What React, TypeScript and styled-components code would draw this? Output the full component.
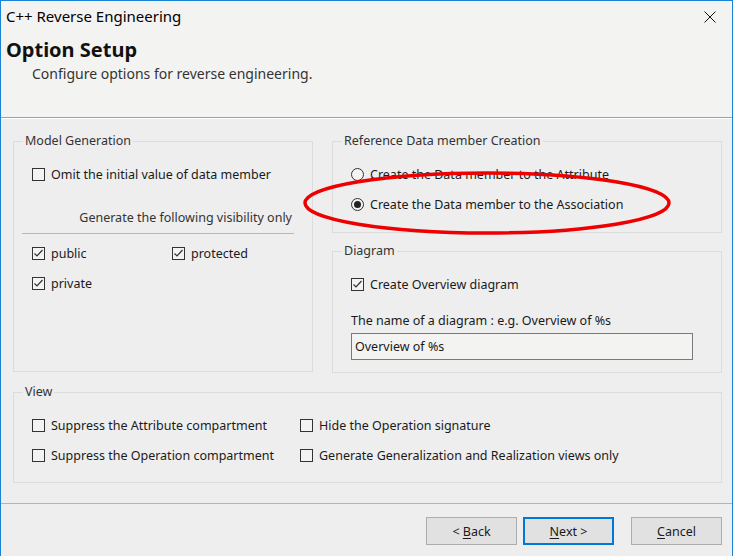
import styled, { createGlobalStyle } from 'styled-components';

const GlobalStyle = createGlobalStyle`
  html, body {
    margin: 0;
    padding: 0;
    background: #eeeeee;
  }
  * {
    box-sizing: border-box;
  }
`;

function Check({ checked }: { checked?: boolean }) {
  return (
    <CheckBox>
      {checked && (
        <svg width="11" height="11" viewBox="0 0 11 11">
          <path d="M1.5 5.5 L4 8 L9.5 2" fill="none" stroke="#333" strokeWidth="1.2" />
        </svg>
      )}
    </CheckBox>
  );
}

export default function App() {
  return (
    <Window>
      <GlobalStyle />
      <Header>
        <TitleBar>
          <span>C++ Reverse Engineering</span>
          <CloseButton>
            <svg width="12" height="12" viewBox="0 0 12 12">
              <path d="M0.5 0.5 L11.5 11.5 M11.5 0.5 L0.5 11.5" stroke="#111" strokeWidth="1" />
            </svg>
          </CloseButton>
        </TitleBar>
        <PageTitle>Option Setup</PageTitle>
        <PageSubtitle>Configure options for reverse engineering.</PageSubtitle>
      </Header>

      <Body>
        <TopRow>
          <Group height={239} width={300}>
            <Legend>Model Generation</Legend>
            <Option>
              <Check />
              Omit the initial value of data member
            </Option>
            <VisibilityLabel>Generate the following visibility only</VisibilityLabel>
            <Divider />
            <VisibilityGrid>
              <Option>
                <Check checked />
                public
              </Option>
              <Option>
                <Check checked />
                protected
              </Option>
              <Option>
                <Check checked />
                private
              </Option>
            </VisibilityGrid>
          </Group>

          <RightColumn>
            <Group height={100}>
              <Legend>Reference Data member Creation</Legend>
              <OptionList>
                <Option>
                  <Radio />
                  Create the Data member to the Attribute
                </Option>
                <Option>
                  <Radio checked />
                  Create the Data member to the Association
                </Option>
              </OptionList>
            </Group>

            <Group height={130}>
              <Legend>Diagram</Legend>
              <Option>
                <Check checked />
                Create Overview diagram
              </Option>
              <FieldLabel>The name of a diagram : e.g. Overview of %s</FieldLabel>
              <TextField defaultValue="Overview of %s" />
            </Group>
          </RightColumn>
        </TopRow>

        <Group height={99}>
          <Legend>View</Legend>
          <ViewGrid>
            <Option>
              <Check />
              Suppress the Attribute compartment
            </Option>
            <Option>
              <Check />
              Hide the Operation signature
            </Option>
            <Option>
              <Check />
              Suppress the Operation compartment
            </Option>
            <Option>
              <Check />
              Generate Generalization and Realization views only
            </Option>
          </ViewGrid>
        </Group>

        <Highlight width="372" height="68" viewBox="0 0 372 68">
          <ellipse cx="186" cy="34" rx="182" ry="30" fill="none" stroke="#ee0000" strokeWidth="3.5" />
        </Highlight>
      </Body>

      <Footer>
        <Button>
          &lt; <u>B</u>ack
        </Button>
        <Button primary>
          <u>N</u>ext &gt;
        </Button>
        <CancelButton>
          <u>C</u>ancel
        </CancelButton>
      </Footer>
    </Window>
  );
}

const Window = styled.div`
  width: 733px;
  height: 556px;
  border: 1px solid #1883d7;
  border-bottom: none;
  background: #eeeeee;
  font-family: 'Noto Sans', 'Open Sans', sans-serif;
  font-size: 12.5px;
  color: #1a1a1a;
  display: flex;
  flex-direction: column;
  overflow: hidden;
`;

const Header = styled.div`
  height: 117px;
  background: #f3f3f2;
  border-bottom: 1px solid #a0a0a0;
  box-shadow: 0 1px 0 #ffffff;
  padding-left: 5px;
`;

const TitleBar = styled.div`
  height: 32px;
  display: flex;
  align-items: center;
  justify-content: space-between;
  font-size: 15px;
  color: #000;
  padding-bottom: 2px;
`;

const CloseButton = styled.div`
  width: 12px;
  height: 12px;
  margin-right: 16px;
  margin-top: 1px;
  display: flex;
`;

const PageTitle = styled.div`
  font-size: 20px;
  font-weight: bold;
  line-height: 24px;
  margin-top: 5px;
  color: #111;
`;

const PageSubtitle = styled.div`
  font-size: 14px;
  line-height: 18px;
  margin-top: 3px;
  padding-left: 26px;
  color: #333;
`;

const Body = styled.div`
  position: relative;
  padding: 15px 10px 0 12px;
  display: flex;
  flex-direction: column;
  gap: 11px;
  height: 385px;
`;

const TopRow = styled.div`
  display: flex;
  gap: 19px;
  align-items: flex-start;
`;

const RightColumn = styled.div`
  flex: 1;
  display: flex;
  flex-direction: column;
  gap: 10px;
`;

const Group = styled.fieldset<{ height: number; width?: number }>`
  margin: 0;
  min-width: 0;
  width: ${(p) => (p.width ? `${p.width}px` : 'auto')};
  height: ${(p) => p.height}px;
  border: 1px solid #dcdcdc;
  padding: 17px 18px 0 18px;
  display: flex;
  flex-direction: column;
  align-items: flex-start;
`;

const Legend = styled.legend`
  margin-left: -9px;
  padding: 0 2px;
  font-size: 12.5px;
  line-height: 16px;
  color: #333;
`;

const Option = styled.label`
  display: flex;
  align-items: center;
  gap: 6px;
  height: 16px;
  white-space: nowrap;
  color: #1a1a1a;
`;

const OptionList = styled.div`
  display: flex;
  flex-direction: column;
  gap: 14px;
`;

const CheckBox = styled.span`
  width: 13px;
  height: 13px;
  border: 1px solid #333;
  background: #f3f3f3;
  display: inline-flex;
  align-items: center;
  justify-content: center;
  flex-shrink: 0;
`;

const Radio = styled.span<{ checked?: boolean }>`
  width: 13px;
  height: 13px;
  border: 1px solid #333;
  border-radius: 50%;
  background: #f3f3f3;
  flex-shrink: 0;
  display: inline-flex;
  align-items: center;
  justify-content: center;

  &::after {
    content: '';
    width: 7px;
    height: 7px;
    border-radius: 50%;
    background: ${(p) => (p.checked ? '#222' : 'transparent')};
  }
`;

const VisibilityLabel = styled.div`
  align-self: stretch;
  text-align: right;
  margin-top: 28px;
  padding-right: 2px;
  line-height: 16px;
  color: #333;
`;

const Divider = styled.div`
  align-self: stretch;
  margin: 7px 0 0 -10px;
  border-top: 1px solid #b8b8b8;
`;

const VisibilityGrid = styled.div`
  margin-top: 11px;
  display: grid;
  grid-template-columns: 140px auto;
  row-gap: 14px;
`;

const FieldLabel = styled.div`
  margin-top: 21px;
  line-height: 16px;
  color: #1a1a1a;
`;

const TextField = styled.input`
  margin-top: 4px;
  width: 342px;
  height: 27px;
  border: 1px solid #7a7a7a;
  background: #f3f3f2;
  font-family: inherit;
  font-size: 12.5px;
  color: #1a1a1a;
  padding: 0 3px;
  outline: none;
`;

const ViewGrid = styled.div`
  display: grid;
  grid-template-columns: 268px auto;
  row-gap: 14px;
`;

const Highlight = styled.svg`
  position: absolute;
  left: 300px;
  top: 51px;
  pointer-events: none;
`;

const Footer = styled.div`
  flex: 1;
  border-top: 1px solid #b4b4b4;
  display: flex;
  justify-content: flex-end;
  align-items: flex-start;
  gap: 6px;
  padding: 13px 10px 0 0;
`;

const Button = styled.button<{ primary?: boolean }>`
  width: 91px;
  height: 28px;
  background: #e1e1e1;
  border: ${(p) => (p.primary ? '2px solid #0078d7' : '1px solid #adadad')};
  font-family: inherit;
  font-size: 12.5px;
  color: #1a1a1a;
  padding: 0;

  u {
    text-decoration-thickness: 1px;
    text-underline-offset: 2px;
  }
`;

const CancelButton = styled(Button)`
  margin-left: 11px;
`;
